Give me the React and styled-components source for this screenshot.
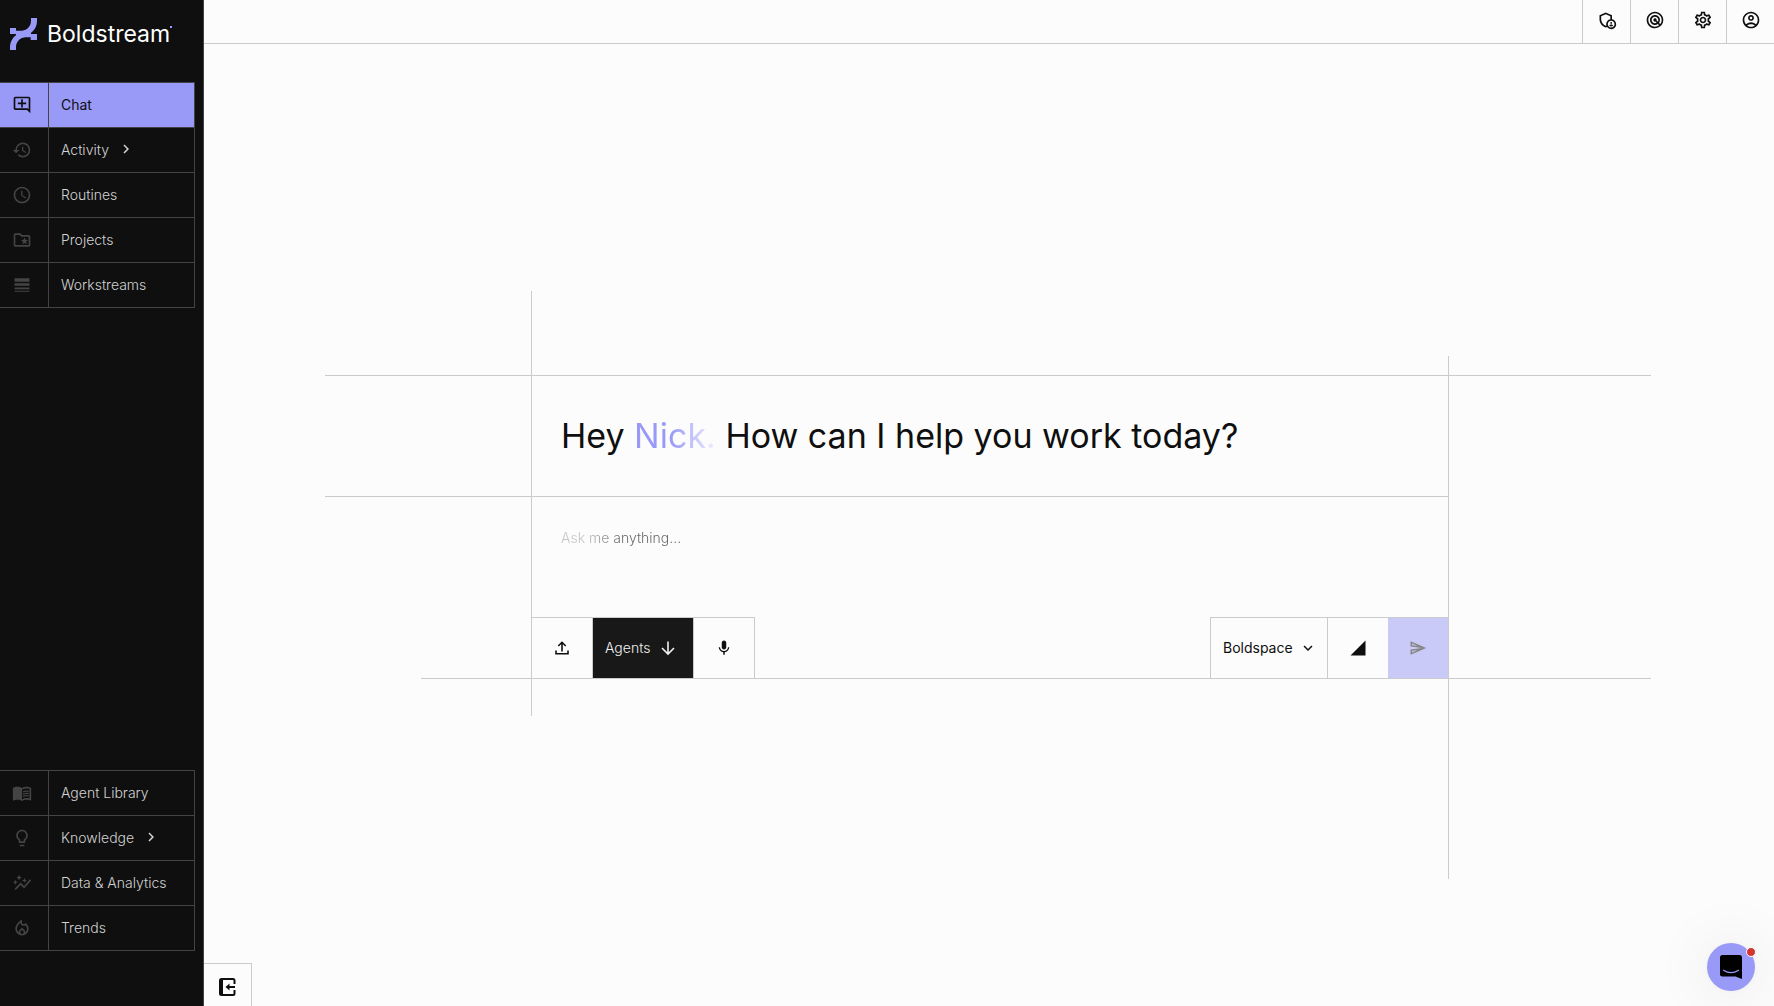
import React, { useState } from 'react';
import styled, { createGlobalStyle } from 'styled-components';
import {
  MdOutlineAddComment,
  MdHistory,
  MdOutlineSchedule,
  MdOutlineFolderSpecial,
  MdLineWeight,
  MdMenuBook,
  MdLightbulbOutline,
  MdAutoGraph,
  MdOutlineLocalFireDepartment,
  MdChevronRight,
  MdOutlineAdminPanelSettings,
  MdRadar,
  MdOutlineSettings,
  MdOutlineAccountCircle,
  MdMic,
  MdKeyboardArrowDown,
  MdSignalCellular4Bar,
  MdOutlineSend,
} from 'react-icons/md';

const GlobalStyle = createGlobalStyle`
  * {
    box-sizing: border-box;
  }

  body {
    margin: 0;
    background: #fcfcfc;
    color: #0f0f0f;
    font-family: Inter, 'Liberation Sans', sans-serif;
    font-size: 14px;
  }

  button,
  textarea {
    font: inherit;
    color: inherit;
  }
`;

const line = '#cbcbcb';
const purple = '#9999f8';

const Page = styled.div`
  display: flex;
  min-height: 100vh;
`;

const Sidebar = styled.aside`
  display: flex;
  flex-direction: column;
  flex: 0 0 204px;
  padding: 18px 8px 55px 0;
  background: #0f0f0f;
  border-right: 1px solid #444;
`;

const Logo = styled.a`
  display: flex;
  align-items: center;
  height: 32px;
  margin-bottom: 32px;
  padding-left: 10px;
  color: #fff;
  font-size: 23px;
  line-height: 32px;
  text-decoration: none;
`;

const LogoName = styled.span`
  margin-left: 10px;
`;

const LogoTick = styled.span`
  align-self: flex-start;
  width: 2px;
  height: 2px;
  margin-top: 8px;
  background: ${purple};
`;

const Nav = styled.nav`
  border-top: 1px solid #444;
  margin-top: ${(props) => (props.$bottom ? 'auto' : '0')};
`;

const NavItem = styled.a`
  display: flex;
  height: 45px;
  border-right: 1px solid #444;
  border-bottom: 1px solid #444;
  background: ${(props) => (props.$active ? purple : 'transparent')};
  color: ${(props) => (props.$active ? '#0f0f0f' : '#d2d2d2')};
  font-weight: ${(props) => (props.$active ? 400 : 300)};
  text-decoration: none;
`;

const NavIcon = styled.span`
  display: flex;
  align-items: center;
  justify-content: center;
  width: 49px;
  padding-right: 4px;
  border-right: 1px solid #444;
  color: ${(props) => (props.$active ? '#0f0f0f' : '#444')};
  font-size: 20px;
`;

const NavLabel = styled.span`
  display: flex;
  align-items: center;
  gap: 8px;
  padding: 0 0 2px 12px;

  svg {
    font-size: 18px;
  }
`;

const Main = styled.main`
  display: flex;
  flex: 1;
  flex-direction: column;
  min-width: 0;
`;

const TopBar = styled.header`
  display: flex;
  justify-content: flex-end;
  height: 44px;
  border-bottom: 1px solid ${line};
`;

const TopButton = styled.button`
  display: flex;
  align-items: center;
  justify-content: center;
  width: 48px;
  padding: 0 0 3px;
  border: 0;
  border-left: 1px solid ${line};
  background: none;
  font-size: 20px;
  cursor: pointer;
`;

const Stage = styled.section`
  display: flex;
  flex: 1;
  flex-direction: column;
  justify-content: center;
  padding: 162px 123px 0 121px;
`;

const Board = styled.div`
  display: grid;
  grid-template-columns: minmax(0, 96fr) minmax(0, 110fr) minmax(0, 918px) minmax(0, 202fr);
  grid-template-rows: 65px 19px auto auto 37px 163px;
`;

const HLine = styled.div`
  grid-column: ${(props) => props.$cols};
  grid-row: ${(props) => props.$row};
  align-self: ${(props) => props.$align || 'start'};
  height: 1px;
  background: ${line};
`;

const VLine = styled.div`
  grid-column: 3;
  grid-row: ${(props) => props.$rows};
  justify-self: ${(props) => props.$align || 'start'};
  width: 1px;
  background: ${line};
`;

const Greeting = styled.h1`
  grid-column: 3;
  grid-row: 3;
  margin: 0;
  padding: 37px 30px 36px;
  font-size: 34px;
  font-weight: 400;
  line-height: 48px;
`;

const Name = styled.span`
  background: linear-gradient(90deg, ${purple} 45%, #f0f0ff);
  background-clip: text;
  color: transparent;
`;

const Composer = styled.form`
  grid-column: 3;
  grid-row: 4;
  display: flex;
  flex-direction: column;
  padding: 1px;
`;

const Prompt = styled.textarea`
  height: 120px;
  padding: 31px 29px;
  border: 0;
  outline: 0;
  background: none;
  font-weight: 300;
  line-height: 20px;
  resize: none;

  &::placeholder {
    background: linear-gradient(90deg, #c4c4c4 24px, #666 60px);
    background-clip: text;
    color: transparent;
    opacity: 1;
  }
`;

const Toolbar = styled.div`
  display: flex;
  justify-content: space-between;
`;

const ToolGroup = styled.div`
  display: flex;
  border: 0 solid ${line};
  border-width: ${(props) => (props.$end ? '1px 0 0 1px' : '1px 1px 0 0')};
`;

const ToolButton = styled.button`
  box-sizing: content-box;
  display: flex;
  align-items: center;
  justify-content: center;
  width: 60px;
  height: 60px;
  padding: 0;
  border: 0;
  background: none;
  color: #0f0f0f;
  cursor: pointer;

  & + & {
    border-left: 1px solid ${line};
  }

  svg {
    font-size: 18px;
  }
`;

const AgentsButton = styled(ToolButton)`
  justify-content: flex-start;
  gap: 8px;
  width: 88px;
  padding-left: 12px;
  background: #181818;
  color: #f0f0f0;
  font-weight: 300;
`;

const SpaceButton = styled(ToolButton)`
  justify-content: flex-start;
  gap: 6px;
  width: 104px;
  padding-left: 12px;
`;

const SendButton = styled(ToolButton)`
  background: #cacaf9;
  color: #858585;

  ${ToolButton} + & {
    border-left: 0;
  }
`;

const CollapseButton = styled.button`
  display: flex;
  align-items: center;
  justify-content: center;
  width: 48px;
  height: 43px;
  padding: 4px 0 0;
  border: 0;
  border-top: 1px solid ${line};
  border-right: 1px solid ${line};
  background: none;
  cursor: pointer;
`;

const Launcher = styled.button`
  position: fixed;
  right: 19px;
  bottom: 15px;
  display: flex;
  align-items: center;
  justify-content: center;
  width: 48px;
  height: 48px;
  padding: 0;
  border: 0;
  border-radius: 50%;
  background: ${purple};
  box-shadow: 0 1px 6px rgba(0, 0, 0, 0.04), 0 2px 60px rgba(0, 0, 0, 0.1);
  cursor: pointer;
`;

const Unread = styled.span`
  position: absolute;
  top: 4px;
  right: -1px;
  width: 10px;
  height: 10px;
  border: 1px solid #fff;
  border-radius: 50%;
  background: #d3352f;
`;

const LogoMark = () => (
  <svg width="27" height="32" viewBox="0 0 81 96" fill={purple} aria-hidden="true">
    <path d="M63 0h18v8c0 16-7 28-18 36v4h18v18H62v-8H45c-16 2-27 14-27 30v8H0v-8c0-15 7-28 18-36v-4H0V30h18v8h18c16-2 27-14 27-30z" />
  </svg>
);

const UploadIcon = () => (
  <svg width="14" height="14" viewBox="0 0 14 14" fill="none" stroke="currentColor" strokeWidth="1.6" aria-hidden="true">
    <path d="M7 10.5V1.5M3.3 5L7 1.3L10.7 5M1 9.5V12.8H13V9.5" />
  </svg>
);

const ArrowDownIcon = () => (
  <svg width="20" height="20" viewBox="0 0 20 20" fill="none" stroke="currentColor" strokeWidth="1.6" aria-hidden="true">
    <path d="M10 3.5V16M4 10L10 16L16 10" />
  </svg>
);

const CollapseIcon = () => (
  <svg width="17" height="18" viewBox="0 0 17 18" fill="none" stroke="currentColor" strokeWidth="2" aria-hidden="true">
    <path d="M15.5 6V2.5Q15.5 1 14 1H2.5Q1 1 1 2.5V15.5Q1 17 2.5 17H14Q15.5 17 15.5 15.5V12" />
    <path d="M3 1V17M8 9H16" />
    <path d="M6.5 9L10.5 5.5V12.5Z" fill="currentColor" stroke="none" />
  </svg>
);

const MessengerIcon = () => (
  <svg width="22" height="24" viewBox="0 0 22 24" aria-hidden="true">
    <path d="M2.5 0H19.5Q22 0 22 2.5V24L15.5 21.5H2.5Q0 21.5 0 19V2.5Q0 0 2.5 0Z" fill="#000" />
    <path d="M3.5 15.2Q11 20 18.5 15.2" fill="none" stroke={purple} strokeWidth="1.2" strokeLinecap="round" />
  </svg>
);

const mainLinks = [
  { label: 'Chat', icon: MdOutlineAddComment },
  { label: 'Activity', icon: MdHistory, more: true },
  { label: 'Routines', icon: MdOutlineSchedule },
  { label: 'Projects', icon: MdOutlineFolderSpecial },
  { label: 'Workstreams', icon: MdLineWeight },
];

const bottomLinks = [
  { label: 'Agent Library', icon: MdMenuBook },
  { label: 'Knowledge', icon: MdLightbulbOutline, more: true },
  { label: 'Data & Analytics', icon: MdAutoGraph },
  { label: 'Trends', icon: MdOutlineLocalFireDepartment },
];

const topActions = [
  { label: 'Admin', icon: MdOutlineAdminPanelSettings },
  { label: 'Radar', icon: MdRadar },
  { label: 'Settings', icon: MdOutlineSettings },
  { label: 'Account', icon: MdOutlineAccountCircle },
];

const NavList = ({ links, active, onSelect, bottom }) => (
  <Nav $bottom={bottom}>
    {links.map(({ label, icon: Icon, more }) => (
      <NavItem key={label} href="#" $active={active === label} onClick={() => onSelect(label)}>
        <NavIcon $active={active === label}>
          <Icon />
        </NavIcon>
        <NavLabel>
          {label}
          {more && <MdChevronRight />}
        </NavLabel>
      </NavItem>
    ))}
  </Nav>
);

const App = () => {
  const [active, setActive] = useState('Chat');
  const [message, setMessage] = useState('');

  const handleSubmit = (e) => {
    e.preventDefault();
    setMessage('');
  };

  return (
    <Page>
      <GlobalStyle />
      <Sidebar>
        <Logo href="#">
          <LogoMark />
          <LogoName>Boldstream</LogoName>
          <LogoTick />
        </Logo>
        <NavList links={mainLinks} active={active} onSelect={setActive} />
        <NavList links={bottomLinks} active={active} onSelect={setActive} bottom />
      </Sidebar>

      <Main>
        <TopBar>
          {topActions.map(({ label, icon: Icon }) => (
            <TopButton key={label} type="button" aria-label={label}>
              <Icon />
            </TopButton>
          ))}
        </TopBar>

        <Stage>
          <Board>
            <HLine $cols="1 / 5" $row="3" />
            <HLine $cols="1 / 4" $row="4" />
            <HLine $cols="2 / 5" $row="4" $align="end" />
            <VLine $rows="1 / 6" />
            <VLine $rows="2 / 7" $align="end" />

            <Greeting>
              Hey <Name>Nick.</Name> How can I help you work today?
            </Greeting>

            <Composer onSubmit={handleSubmit}>
              <Prompt
                aria-label="Message"
                placeholder="Ask me anything..."
                value={message}
                onChange={(e) => setMessage(e.target.value)}
              />
              <Toolbar>
                <ToolGroup>
                  <ToolButton type="button" aria-label="Upload">
                    <UploadIcon />
                  </ToolButton>
                  <AgentsButton type="button">
                    Agents
                    <ArrowDownIcon />
                  </AgentsButton>
                  <ToolButton type="button" aria-label="Dictate">
                    <MdMic />
                  </ToolButton>
                </ToolGroup>
                <ToolGroup $end>
                  <SpaceButton type="button">
                    Boldspace
                    <MdKeyboardArrowDown />
                  </SpaceButton>
                  <ToolButton type="button" aria-label="Level">
                    <MdSignalCellular4Bar />
                  </ToolButton>
                  <SendButton type="submit" aria-label="Send">
                    <MdOutlineSend />
                  </SendButton>
                </ToolGroup>
              </Toolbar>
            </Composer>
          </Board>
        </Stage>

        <CollapseButton type="button" aria-label="Collapse sidebar">
          <CollapseIcon />
        </CollapseButton>
      </Main>

      <Launcher type="button" aria-label="Open messenger">
        <MessengerIcon />
        <Unread />
      </Launcher>
    </Page>
  );
};

export default App;
